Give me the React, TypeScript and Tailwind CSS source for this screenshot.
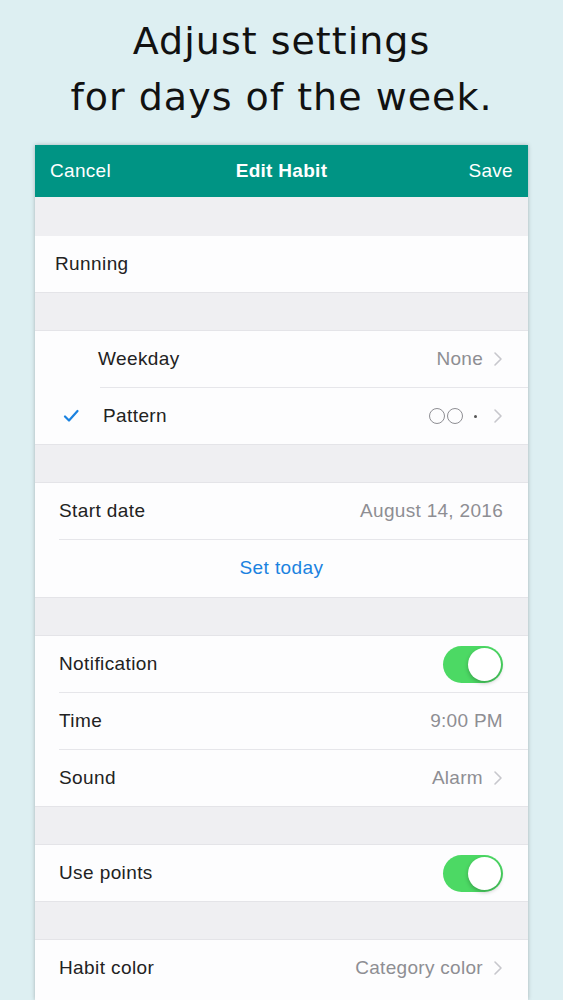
import React from 'react';

const font = { fontFamily: '"Liberation Sans", Arial, sans-serif' };

const Chevron = () => (
  <svg width="10" height="16" viewBox="0 0 10 16" className="ml-[10px]">
    <path d="M2 2l6 6-6 6" fill="none" stroke="#c7c7cc" strokeWidth="1.6" strokeLinecap="round" strokeLinejoin="round" />
  </svg>
);

const Toggle = () => (
  <div className="w-[60px] h-[37px] rounded-full bg-[#4cd964] flex items-center justify-end pr-[2px]">
    <div className="w-[33px] h-[33px] rounded-full bg-white shadow-[0_2px_4px_rgba(0,0,0,0.25)]" />
  </div>
);

const Gap = () => <div className="h-[39px] bg-[#efeff2] border-y border-[#e4e4e8]" />;

type RowProps = {
  label: string;
  value?: React.ReactNode;
  chevron?: boolean;
  toggle?: boolean;
  indent?: string;
  sep?: boolean;
  sepIndent?: string;
  lead?: React.ReactNode;
};

const Row = ({ label, value, chevron, toggle, indent = 'pl-[24px]', sep, sepIndent = 'ml-[24px]', lead }: RowProps) => (
  <div className="bg-[#fdfdfe]">
    <div className={`h-[56px] flex items-center pr-[25px] ${indent}`}>
      {lead}
      <span className="text-[19px] tracking-[0.4px] text-[#222]">{label}</span>
      <div className="ml-auto flex items-center text-[19px] tracking-[0.3px] text-[#8e8e93]">
        {value}
        {chevron && <Chevron />}
        {toggle && <Toggle />}
      </div>
    </div>
    {sep && <div className={`h-px bg-[#e6e6ea] ${sepIndent}`} />}
  </div>
);

export default function App() {
  return (
    <div className="w-[563px] h-[1000px] overflow-hidden bg-[#ddeff2]" style={font}>
      <div
        className="text-center text-[38px] leading-[56px] pt-[13px] text-[#111] tracking-[1px]"
        style={{ fontFamily: '"DejaVu Sans", sans-serif' }}
      >
        <div>Adjust settings</div>
        <div>for days of the week.</div>
      </div>
      <div className="mx-[35px] mt-[20px] shadow-[0_0_4px_rgba(0,0,0,0.25)] bg-[#efeff2]">
        <div className="h-[52px] bg-[#009484] grid grid-cols-3 items-center px-[15px] text-white text-[19px] tracking-[0.3px]">
          <span>Cancel</span>
          <span className="font-bold text-center">Edit Habit</span>
          <span className="text-right">Save</span>
        </div>
        <div className="h-[39px] bg-[#efeff2]" />
        <Row label="Running" indent="pl-[20px]" />
        <Gap />
        <Row label="Weekday" value="None" chevron indent="pl-[63px]" sep sepIndent="ml-[65px]" />
        <Row
          label="Pattern"
          indent="pl-[28px]"
          lead={
            <svg width="16" height="14" viewBox="0 0 16 14" className="mr-[24px]">
              <path d="M2 7.5l4 4L14.5 2" fill="none" stroke="#1a82e0" strokeWidth="2.2" strokeLinecap="round" strokeLinejoin="round" />
            </svg>
          }
          value={
            <span className="flex items-center gap-[2px]">
              <span className="w-[16px] h-[16px] rounded-full border border-[#8e8e93]" />
              <span className="w-[16px] h-[16px] rounded-full border border-[#8e8e93]" />
              <span className="w-[3px] h-[3px] rounded-full bg-[#555] ml-[9px] mr-[6px]" />
            </span>
          }
          chevron
        />
        <Gap />
        <Row label="Start date" value="August 14, 2016" sep />
        <div className="h-[57px] bg-[#fdfdfe] flex items-center justify-center text-[19px] tracking-[0.4px] text-[#1a82e0]">Set today</div>
        <Gap />
        <Row label="Notification" toggle sep />
        <Row label="Time" value="9:00 PM" sep />
        <Row label="Sound" value="Alarm" chevron />
        <Gap />
        <Row label="Use points" toggle />
        <Gap />
        <Row label="Habit color" value="Category color" chevron />
        <div className="h-[4px] bg-[#fdfdfe]" />
      </div>
    </div>
  );
}
